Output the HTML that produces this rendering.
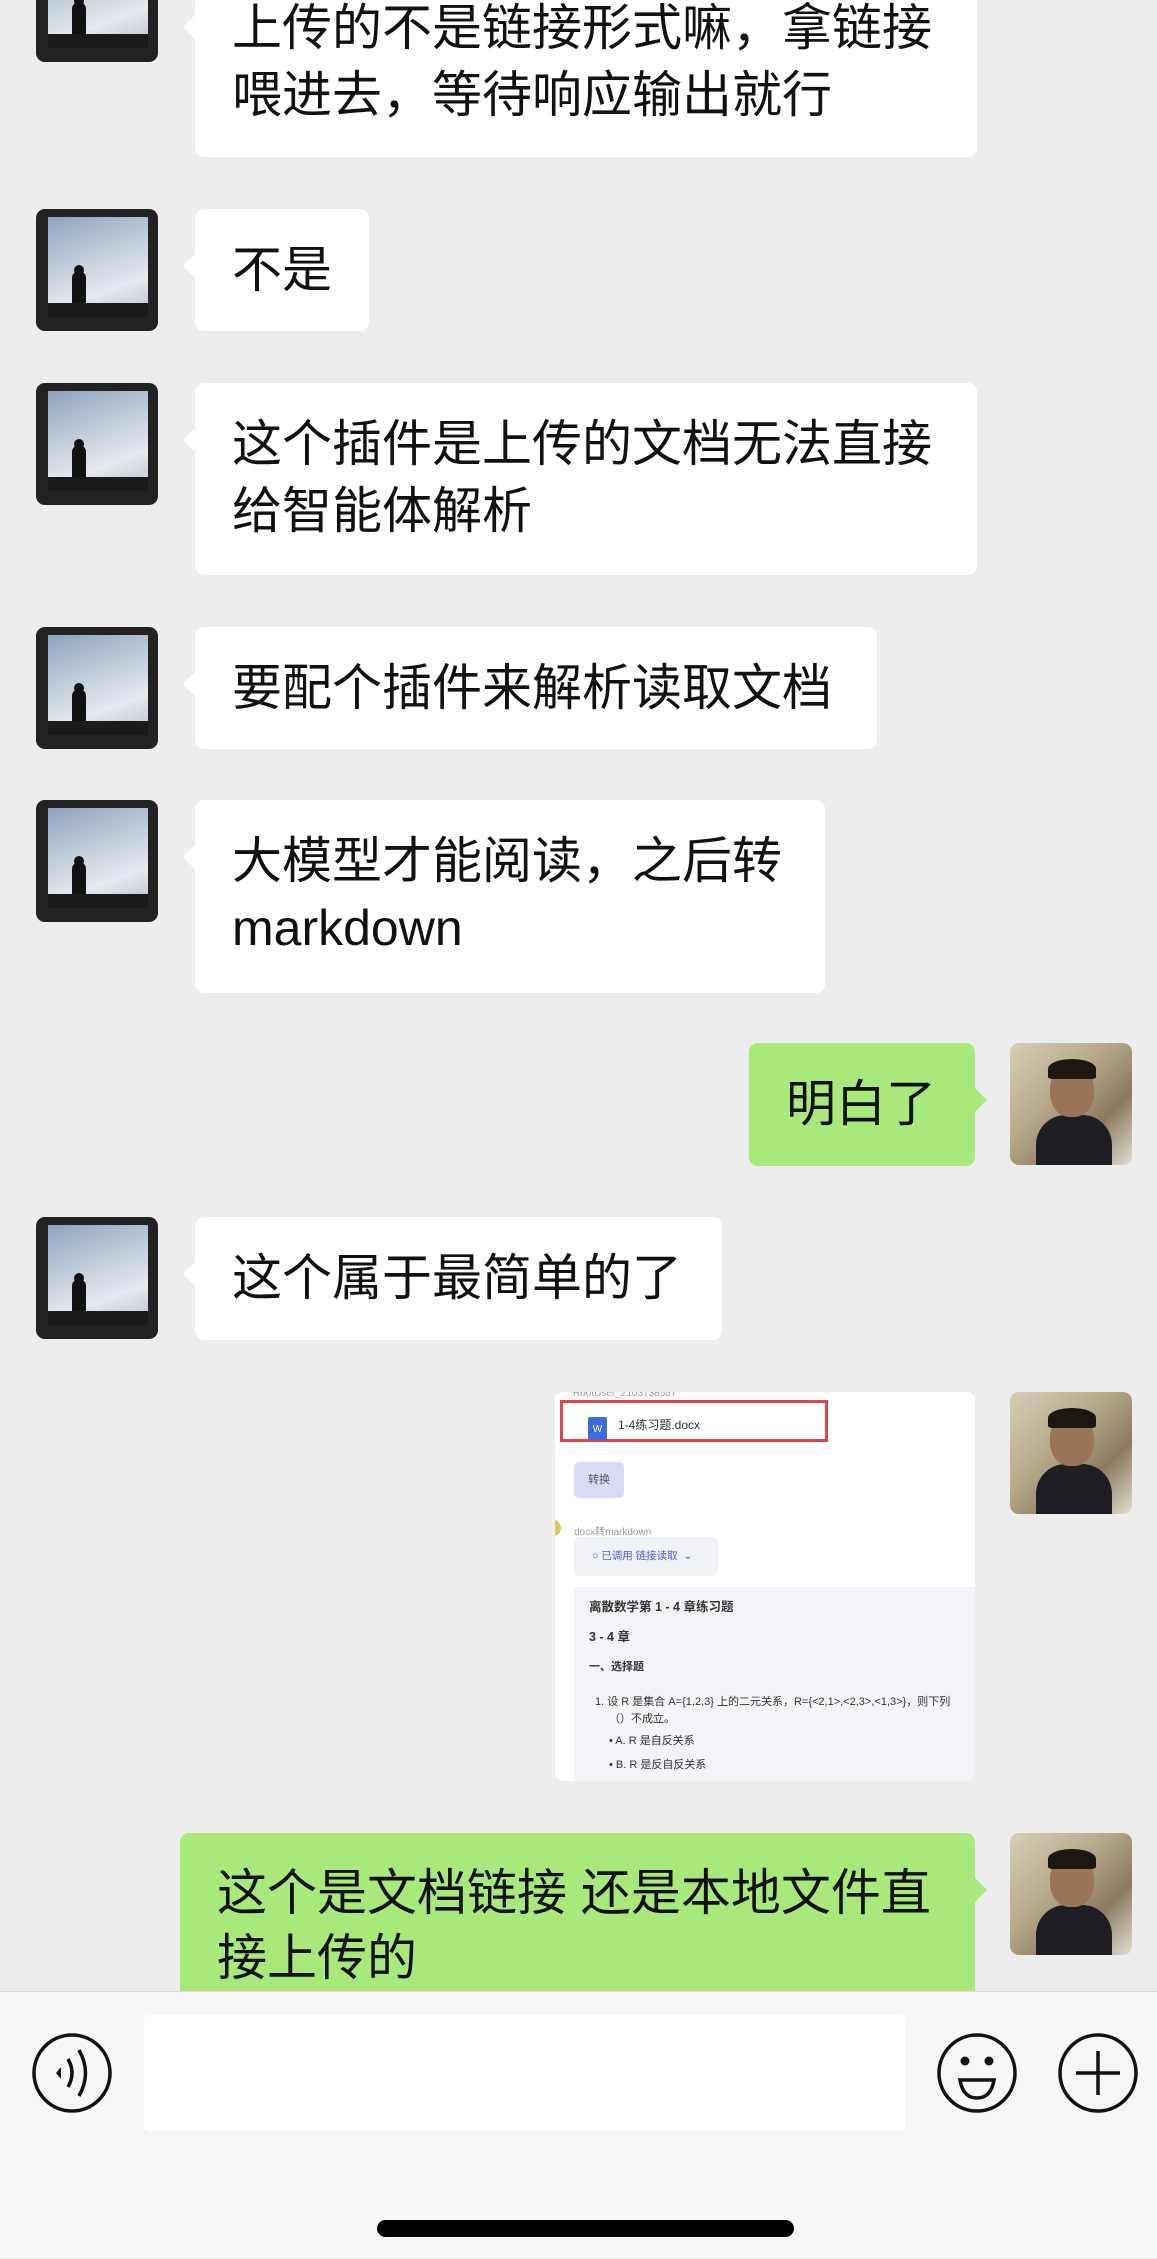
<!DOCTYPE html>
<html><head><meta charset="utf-8"><style>
*{margin:0;padding:0;box-sizing:border-box}
body{width:1157px;height:2258px;background:#ededed;position:relative;overflow:hidden;font-family:"Liberation Sans","Noto Sans CJK SC",sans-serif;color:#111}
.av{position:absolute;width:122px;height:122px;border-radius:9px;overflow:hidden}
.avl{left:36px;background:#222}
.avl .sky{position:absolute;left:12px;top:8px;width:100px;height:100px;background:linear-gradient(160deg,#8ea3bf 0%,#c7d1de 45%,#e6e9ee 70%,#b9c1cc 100%)}
.avl .cat{position:absolute;left:36px;top:62px;width:14px;height:34px;background:#111;border-radius:7px 7px 3px 3px}
.avl .ear{position:absolute;left:38px;top:56px;width:10px;height:10px;background:#111;border-radius:50%}
.avl .ledge{position:absolute;left:12px;top:94px;width:100px;height:14px;background:#1a1a1a}
.avr{left:1010px;background:linear-gradient(135deg,#d8cdb7 0%,#b8a98c 40%,#8c7a60 70%,#e4ddd0 100%)}
.avr .face{position:absolute;left:40px;top:22px;width:44px;height:52px;border-radius:45%;background:#9a7458}
.avr .hair{position:absolute;left:38px;top:16px;width:48px;height:20px;border-radius:50% 50% 10% 10%;background:#1c1712}
.avr .body{position:absolute;left:26px;top:72px;width:76px;height:60px;border-radius:30px 30px 0 0;background:#1e1d24}
.b{position:absolute;background:#fff;border-radius:9px;font-size:50px;line-height:67px;padding:28px 37px 0;white-space:nowrap}
.b.l::before{content:"";position:absolute;left:-12px;top:45px;border:12px solid transparent;border-left:0;border-right-color:#fff}
.b.r{background:#a9e97b}
.b.r::after{content:"";position:absolute;right:-12px;top:45px;border:12px solid transparent;border-right:0;border-left-color:#a9e97b}
.shot{position:absolute;left:555px;top:1392px;width:420px;height:389px;background:#fff;border-radius:8px;overflow:hidden;font-size:11px;color:#333}
.bar{position:absolute;left:0;top:1991px;width:1157px;height:267px;background:#f6f6f6;border-top:1px solid #dcdcdc}
</style></head><body>

<div class="av avl" style="top:-60px"><div class="sky"></div><div class="ear"></div><div class="cat"></div><div class="ledge"></div></div>
<div class="b l" style="left:195px;top:-30px;width:782px;height:187px;padding-top:0"><div style="position:absolute;left:37px;top:25px">上传的不是链接形式嘛，拿链接<br>喂进去，等待响应输出就行</div></div>

<div class="av avl" style="top:209px"><div class="sky"></div><div class="ear"></div><div class="cat"></div><div class="ledge"></div></div>
<div class="b l" style="left:195px;top:209px;height:122px">不是</div>

<div class="av avl" style="top:383px"><div class="sky"></div><div class="ear"></div><div class="cat"></div><div class="ledge"></div></div>
<div class="b l" style="left:195px;top:383px;width:782px;height:192px">这个插件是上传的文档无法直接<br>给智能体解析</div>

<div class="av avl" style="top:627px"><div class="sky"></div><div class="ear"></div><div class="cat"></div><div class="ledge"></div></div>
<div class="b l" style="left:195px;top:627px;width:682px;height:122px">要配个插件来解析读取文档</div>

<div class="av avl" style="top:800px"><div class="sky"></div><div class="ear"></div><div class="cat"></div><div class="ledge"></div></div>
<div class="b l" style="left:195px;top:800px;width:630px;height:193px">大模型才能阅读，之后转<br>markdown</div>

<div class="av avr" style="top:1043px"><div class="body"></div><div class="face"></div><div class="hair"></div></div>
<div class="b r" style="left:749px;top:1043px;width:226px;height:123px">明白了</div>

<div class="av avl" style="top:1217px"><div class="sky"></div><div class="ear"></div><div class="cat"></div><div class="ledge"></div></div>
<div class="b l" style="left:195px;top:1217px;width:527px;height:123px">这个属于最简单的了</div>

<div class="av avr" style="top:1392px"><div class="body"></div><div class="face"></div><div class="hair"></div></div>
<div class="shot">
 <div style="position:absolute;left:18px;top:-4px;color:#999;font-size:10px">RootUser_2103738557</div>
 <div style="position:absolute;left:5px;top:8px;width:268px;height:42px;border:3px solid #d9474a"></div>
 <div style="position:absolute;left:33px;top:25px;width:19px;height:23px;background:#3a6ee0;border-radius:2px;color:#fff;font-size:10px;text-align:center;line-height:26px">W</div>
 <div style="position:absolute;left:63px;top:24px;font-size:12px">1-4练习题.docx</div>
 <div style="position:absolute;left:19px;top:70px;width:50px;height:36px;background:#d8daf6;border-radius:5px;font-size:11px;color:#555;text-align:center;line-height:36px">转换</div>
 <div style="position:absolute;left:-8px;top:128px;width:14px;height:16px;border-radius:50%;background:#e2c55a"></div>
 <div style="position:absolute;left:19px;top:131px;color:#999;font-size:10px">docx转markdown</div>
 <div style="position:absolute;left:19px;top:145px;width:144px;height:39px;background:#f1f2f6;border-radius:5px;color:#4c5ad0;font-size:10.5px;line-height:39px;padding-left:18px">○ 已调用 链接读取 &nbsp;⌄</div>
 <div style="position:absolute;left:19px;top:195px;width:410px;height:200px;background:#f3f4f7;padding:13px 15px;font-size:11px;line-height:14px">
  <div style="font-weight:bold;font-size:12.5px">离散数学第 1 - 4 章练习题</div>
  <div style="font-weight:bold;font-size:12.5px;margin-top:16px">3 - 4 章</div>
  <div style="font-weight:bold;margin-top:16px">一、选择题</div>
  <div style="margin-top:21px;padding-left:6px;white-space:nowrap">1. 设 R 是集合 A={1,2,3} 上的二元关系，R={&lt;2,1&gt;,&lt;2,3&gt;,&lt;1,3&gt;}，则下列</div>
  <div style="padding-left:20px;margin-top:3px">（）不成立。</div>
  <div style="padding-left:20px;margin-top:8px">• A. R 是自反关系</div>
  <div style="padding-left:20px;margin-top:10px">• B. R 是反自反关系</div>
 </div>
</div>

<div class="av avr" style="top:1833px"><div class="body"></div><div class="face"></div><div class="hair"></div></div>
<div class="b r" style="left:180px;top:1833px;width:795px;height:200px;line-height:65px">这个是文档链接 还是本地文件直<br>接上传的</div>

<div class="bar">
 <div style="position:absolute;left:144px;top:23px;width:761px;height:116px;background:#fff;border-radius:6px"></div>
 <svg style="position:absolute;left:0;top:0" width="1157" height="267" viewBox="0 0 1157 267">
  <g fill="none" stroke="#111" stroke-width="3.5">
   <circle cx="72" cy="81" r="38"/>
   <path d="M68 67 Q76 81 68 95"/><path d="M79 58 Q92 81 79 104"/>
   <circle cx="977" cy="81" r="38"/>
   <path d="M960 88 L994 88 Q991 106 977 106 Q963 106 960 88 Z"/>
   <circle cx="1098" cy="81" r="38"/>
   <path d="M1098 59 V103 M1076 81 H1120"/>
  </g>
  <path d="M56 81 L61 75 L61 87 Z" fill="#111"/>
  <circle cx="965" cy="69" r="4.5" fill="#111"/><circle cx="989" cy="69" r="4.5" fill="#111"/>
  <rect x="377" y="228" width="417" height="17" rx="8.5" fill="#000"/>
 </svg>
</div>
</body></html>
